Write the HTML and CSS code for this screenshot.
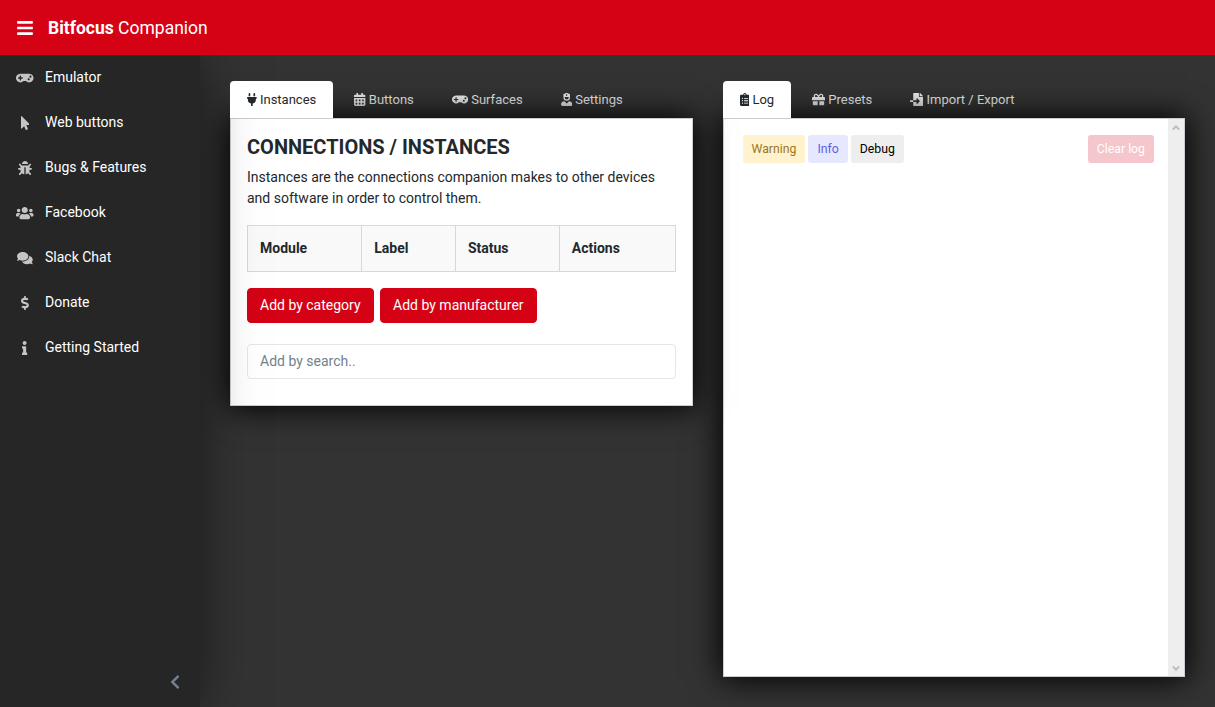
FILE: index.html
```html
<!DOCTYPE html>
<html>
<head>
	<meta charset="UTF-8">
	<title>Bitfocus Companion</title>
	<link rel="stylesheet" href="styles.css">
</head>
<body>
	<header class="topbar">
		<svg class="menu-icon" viewBox="0 0 448 512"><path d="M16 132h416c8.837 0 16-7.163 16-16V76c0-8.837-7.163-16-16-16H16C7.163 60 0 67.163 0 76v40c0 8.837 7.163 16 16 16zm0 160h416c8.837 0 16-7.163 16-16v-40c0-8.837-7.163-16-16-16H16c-8.837 0-16 7.163-16 16v40c0 8.837 7.163 16 16 16zm0 160h416c8.837 0 16-7.163 16-16v-40c0-8.837-7.163-16-16-16H16c-8.837 0-16 7.163-16 16v40c0 8.837 7.163 16 16 16z"/></svg>
		<div class="brand"><b>Bitfocus</b> Companion</div>
	</header>

	<div class="app-body">
		<nav class="sidebar">
			<ul class="nav-list">
				<li class="nav-item">
					<span class="nav-icon"><svg viewBox="0 0 640 512"><path d="M480.07 96H160a160 160 0 1 0 114.24 272h91.52A160 160 0 1 0 480.07 96zM248 268a12 12 0 0 1-12 12h-52v52a12 12 0 0 1-12 12h-24a12 12 0 0 1-12-12v-52H84a12 12 0 0 1-12-12v-24a12 12 0 0 1 12-12h52v-52a12 12 0 0 1 12-12h24a12 12 0 0 1 12 12v52h52a12 12 0 0 1 12 12zm216 76a40 40 0 1 1 40-40 40 40 0 0 1-40 40zm64-96a40 40 0 1 1 40-40 40 40 0 0 1-40 40z"/></svg></span>
					Emulator
				</li>
				<li class="nav-item">
					<span class="nav-icon"><svg viewBox="0 0 320 512"><path d="M302.189 329.126H196.105l55.831 135.993c3.889 9.428-.555 19.999-9.444 23.999l-49.165 21.427c-9.165 4-19.443-.571-23.332-9.714l-53.053-129.136-86.664 89.138C18.729 472.71 0 463.554 0 447.977V18.299C0 1.899 19.921-6.096 30.277 5.443l284.412 292.542c11.472 11.179 3.007 31.141-12.5 31.141z"/></svg></span>
					Web buttons
				</li>
				<li class="nav-item">
					<span class="nav-icon"><svg viewBox="0 0 512 512"><path d="M511.988 288.9c-.478 17.43-15.217 31.1-32.653 31.1H424v16c0 21.864-4.882 42.584-13.6 61.145l60.228 60.228c12.496 12.497 12.496 32.758 0 45.255-12.498 12.497-32.759 12.496-45.256 0l-54.736-54.736C345.886 467.965 314.351 480 280 480V236c0-6.627-5.373-12-12-12h-24c-6.627 0-12 5.373-12 12v244c-34.351 0-65.886-12.035-90.636-32.108l-54.736 54.736c-12.498 12.497-32.759 12.496-45.256 0-12.496-12.497-12.496-32.758 0-45.255l60.228-60.228C92.882 378.584 88 357.864 88 336v-16H32.666C15.23 320 .491 306.33.013 288.9-.484 270.816 14.028 256 32 256h56v-58.745l-46.628-46.628c-12.496-12.497-12.496-32.758 0-45.255 12.498-12.497 32.758-12.497 45.256 0L141.255 160h229.489l54.627-54.627c12.498-12.497 32.758-12.497 45.256 0 12.496 12.497 12.496 32.758 0 45.255L424 197.255V256h56c17.972 0 32.484 14.816 31.988 32.9zM257 0c-61.856 0-112 50.144-112 112h224C369 50.144 318.856 0 257 0z"/></svg></span>
					Bugs &amp; Features
				</li>
				<li class="nav-item">
					<span class="nav-icon"><svg viewBox="0 0 640 512"><path d="M96 224c35.3 0 64-28.7 64-64s-28.7-64-64-64-64 28.7-64 64 28.7 64 64 64zm448 0c35.3 0 64-28.7 64-64s-28.7-64-64-64-64 28.7-64 64 28.7 64 64 64zm32 32h-64c-17.6 0-33.5 7.1-45.1 18.6 40.3 22.1 68.9 62 75.1 109.4h66c17.7 0 32-14.3 32-32v-32c0-35.3-28.7-64-64-64zm-256 0c61.9 0 112-50.1 112-112S381.9 32 320 32 208 82.1 208 144s50.1 112 112 112zm76.8 32h-8.3c-20.8 10-43.9 16-68.5 16s-47.6-6-68.5-16h-8.3C179.6 288 128 339.6 128 403.2V432c0 26.5 21.5 48 48 48h288c26.5 0 48-21.5 48-48v-28.8c0-63.6-51.6-115.2-115.2-115.2zm-223.7-13.4C161.5 263.1 145.6 256 128 256H64c-35.3 0-64 28.7-64 64v32c0 17.7 14.3 32 32 32h65.9c6.3-47.4 34.9-87.3 75.2-109.4z"/></svg></span>
					Facebook
				</li>
				<li class="nav-item">
					<span class="nav-icon"><svg viewBox="0 0 576 512"><path d="M416 192c0-88.4-93.1-160-208-160S0 103.6 0 192c0 34.3 14.1 65.9 38 92-13.4 30.2-35.5 54.2-35.8 54.5-2.2 2.3-2.8 5.7-1.5 8.7S4.8 352 8 352c36.6 0 66.9-12.3 88.7-25 32.2 15.7 70.3 25 111.3 25 114.9 0 208-71.6 208-160zm122 220c23.9-26 38-57.7 38-92 0-66.9-53.5-124.2-129.3-148.1.9 6.6 1.3 13.3 1.3 20.1 0 105.9-107.7 192-240 192-10.8 0-21.3-.8-31.7-1.9C207.8 439.6 281.8 480 368 480c41 0 79.1-9.2 111.3-25 21.8 12.7 52.1 25 88.7 25 3.2 0 6.1-1.9 7.3-4.8 1.3-2.9.7-6.3-1.5-8.7-.3-.3-22.4-24.2-35.8-54.5z"/></svg></span>
					Slack Chat
				</li>
				<li class="nav-item">
					<span class="nav-icon"><svg viewBox="0 0 288 512"><path d="M209.2 233.4l-108-31.6C88.7 198.2 80 186.5 80 173.5c0-16.3 13.2-29.5 29.5-29.5h66.3c12.2 0 24.2 3.7 34.2 10.5 6.1 4.1 14.3 3.1 19.5-2l34.8-34c7.1-6.9 6.1-18.4-1.8-24.5C238 74.8 207.4 64.1 176 64V16c0-8.8-7.2-16-16-16h-32c-8.8 0-16 7.2-16 16v48h-2.5C45.8 64-5.4 118.7.5 183.6c4.2 46.1 39.4 83.6 83.8 96.6l102.5 30c12.5 3.7 21.2 15.3 21.2 28.3 0 16.3-13.2 29.5-29.5 29.5h-66.3C100 368 88 364.3 78 357.5c-6.1-4.1-14.3-3.1-19.5 2l-34.8 34c-7.1 6.9-6.1 18.4 1.8 24.5 24.5 19.2 55.1 29.9 86.5 30v48c0 8.8 7.2 16 16 16h32c8.8 0 16-7.2 16-16v-48.2c46.6-.9 90.3-28.6 105.7-72.7 21.5-61.6-14.6-124.8-72.5-141.7z"/></svg></span>
					Donate
				</li>
				<li class="nav-item">
					<span class="nav-icon"><svg viewBox="0 0 192 512"><path d="M20 424.229h20V279.771H20c-11.046 0-20-8.954-20-20V212c0-11.046 8.954-20 20-20h112c11.046 0 20 8.954 20 20v212.229h20c11.046 0 20 8.954 20 20V492c0 11.046-8.954 20-20 20H20c-11.046 0-20-8.954-20-20v-47.771c0-11.046 8.954-20 20-20zM96 0C56.235 0 24 32.235 24 72s32.235 72 72 72 72-32.235 72-72S135.764 0 96 0z"/></svg></span>
					Getting Started
				</li>
			</ul>
			<div class="minimizer">
				<svg viewBox="0 0 320 512"><path d="M34.52 239.03L228.87 44.69c9.37-9.37 24.57-9.37 33.94 0l22.67 22.67c9.36 9.36 9.37 24.52.04 33.9L131.49 256l154.02 154.75c9.34 9.38 9.32 24.54-.04 33.9l-22.67 22.67c-9.37 9.37-24.57 9.37-33.94 0L34.52 272.97c-9.37-9.37-9.37-24.57 0-33.94z"/></svg>
			</div>
		</nav>

		<main class="content">
			<section class="column">
				<ul class="tabs">
					<li class="tab active"><svg viewBox="0 0 384 512"><path d="M320,32a32,32,0,0,0-64,0v96h64Zm48,128H16A16,16,0,0,0,0,176v32a16,16,0,0,0,16,16H32v32A160.07,160.07,0,0,0,160,412.8V512h64V412.8A160.07,160.07,0,0,0,352,256V224h16a16,16,0,0,0,16-16V176A16,16,0,0,0,368,160ZM128,32a32,32,0,0,0-64,0v96h64Z"/></svg>Instances</li>
					<li class="tab"><svg viewBox="0 0 448 512"><path d="M0 464c0 26.5 21.5 48 48 48h352c26.5 0 48-21.5 48-48V192H0v272zm320-196c0-6.6 5.4-12 12-12h40c6.6 0 12 5.4 12 12v40c0 6.6-5.4 12-12 12h-40c-6.6 0-12-5.4-12-12v-40zm0 128c0-6.6 5.4-12 12-12h40c6.6 0 12 5.4 12 12v40c0 6.6-5.4 12-12 12h-40c-6.6 0-12-5.4-12-12v-40zM192 268c0-6.6 5.4-12 12-12h40c6.6 0 12 5.4 12 12v40c0 6.6-5.4 12-12 12h-40c-6.6 0-12-5.4-12-12v-40zm0 128c0-6.6 5.4-12 12-12h40c6.6 0 12 5.4 12 12v40c0 6.6-5.4 12-12 12h-40c-6.6 0-12-5.4-12-12v-40zM64 268c0-6.6 5.4-12 12-12h40c6.6 0 12 5.4 12 12v40c0 6.6-5.4 12-12 12H76c-6.6 0-12-5.4-12-12v-40zm0 128c0-6.6 5.4-12 12-12h40c6.6 0 12 5.4 12 12v40c0 6.6-5.4 12-12 12H76c-6.6 0-12-5.4-12-12v-40zM400 64h-48V16c0-8.8-7.2-16-16-16h-32c-8.8 0-16 7.2-16 16v48H160V16c0-8.8-7.2-16-16-16h-32c-8.8 0-16 7.2-16 16v48H48C21.5 64 0 85.5 0 112v48h448v-48c0-26.5-21.5-48-48-48z"/></svg>Buttons</li>
					<li class="tab"><svg viewBox="0 0 640 512"><path d="M480.07 96H160a160 160 0 1 0 114.24 272h91.52A160 160 0 1 0 480.07 96zM248 268a12 12 0 0 1-12 12h-52v52a12 12 0 0 1-12 12h-24a12 12 0 0 1-12-12v-52H84a12 12 0 0 1-12-12v-24a12 12 0 0 1 12-12h52v-52a12 12 0 0 1 12-12h24a12 12 0 0 1 12 12v52h52a12 12 0 0 1 12 12zm216 76a40 40 0 1 1 40-40 40 40 0 0 1-40 40zm64-96a40 40 0 1 1 40-40 40 40 0 0 1-40 40z"/></svg>Surfaces</li>
					<li class="tab"><svg viewBox="0 0 448 512"><path d="M319.41,320,224,415.39,128.59,320C57.1,323.1,0,381.6,0,453.79A58.21,58.21,0,0,0,58.21,512H389.79A58.21,58.21,0,0,0,448,453.79C448,381.6,390.9,323.1,319.41,320ZM224,304A128,128,0,0,0,352,176V65.82a32,32,0,0,0-20.76-30L246.47,4.07a64,64,0,0,0-44.94,0L116.76,35.86A32,32,0,0,0,96,65.82V176A128,128,0,0,0,224,304ZM184,71.67a5,5,0,0,1,5-5h21.67V45a5,5,0,0,1,5-5h16.66a5,5,0,0,1,5,5V66.67H259a5,5,0,0,1,5,5V88.33a5,5,0,0,1-5,5H237.33V115a5,5,0,0,1-5,5H215.67a5,5,0,0,1-5-5V93.33H189a5,5,0,0,1-5-5ZM144,160H304v16a80,80,0,0,1-160,0Z"/></svg>Settings</li>
				</ul>
				<div class="panel panel-instances">
					<h3 class="panel-title">CONNECTIONS / INSTANCES</h3>
					<p class="panel-text">Instances are the connections companion makes to other devices and software in order to control them.</p>
					<table class="instances-table">
						<thead>
							<tr>
								<th>Module</th>
								<th>Label</th>
								<th>Status</th>
								<th>Actions</th>
							</tr>
						</thead>
					</table>
					<div class="add-buttons">
						<button class="btn-primary">Add by category</button>
						<button class="btn-primary">Add by manufacturer</button>
					</div>
					<input class="search" type="text" placeholder="Add by search..">
				</div>
			</section>

			<section class="column">
				<ul class="tabs">
					<li class="tab active"><svg viewBox="0 0 384 512"><path d="M336 64h-80c0-35.3-28.7-64-64-64s-64 28.7-64 64H48C21.5 64 0 85.5 0 112v352c0 26.5 21.5 48 48 48h288c26.5 0 48-21.5 48-48V112c0-26.5-21.5-48-48-48zM96 424c-13.3 0-24-10.7-24-24s10.7-24 24-24 24 10.7 24 24-10.7 24-24 24zm0-96c-13.3 0-24-10.7-24-24s10.7-24 24-24 24 10.7 24 24-10.7 24-24 24zm0-96c-13.3 0-24-10.7-24-24s10.7-24 24-24 24 10.7 24 24-10.7 24-24 24zm96-192c13.3 0 24 10.7 24 24s-10.7 24-24 24-24-10.7-24-24 10.7-24 24-24zm128 368c0 4.4-3.6 8-8 8H168c-4.4 0-8-3.6-8-8v-16c0-4.4 3.6-8 8-8h144c4.4 0 8 3.6 8 8v16zm0-96c0 4.4-3.6 8-8 8H168c-4.4 0-8-3.6-8-8v-16c0-4.4 3.6-8 8-8h144c4.4 0 8 3.6 8 8v16zm0-96c0 4.4-3.6 8-8 8H168c-4.4 0-8-3.6-8-8v-16c0-4.4 3.6-8 8-8h144c4.4 0 8 3.6 8 8v16z"/></svg>Log</li>
					<li class="tab"><svg viewBox="0 0 512 512"><path d="M32 448c0 17.7 14.3 32 32 32h160V320H32v128zm256 32h160c17.7 0 32-14.3 32-32V320H288v160zm192-320h-42.1c6.2-12.1 10.1-25.5 10.1-40 0-48.5-39.5-88-88-88-41.6 0-68.5 21.3-103 68.3-34.5-47-61.4-68.3-103-68.3-48.5 0-88 39.5-88 88 0 14.5 3.8 27.9 10.1 40H32c-17.7 0-32 14.3-32 32v80c0 8.8 7.2 16 16 16h480c8.8 0 16-7.2 16-16v-80c0-17.7-14.3-32-32-32zm-326.1 0c-22.1 0-40-17.9-40-40s17.9-40 40-40c19.9 0 34.6 3.3 86.1 80h-86.1zm206.1 0h-86.1c51.4-76.5 65.7-80 86.1-80 22.1 0 40 17.9 40 40s-17.9 40-40 40z"/></svg>Presets</li>
					<li class="tab"><svg viewBox="0 0 512 512"><path d="M16 288c-8.8 0-16 7.2-16 16v32c0 8.8 7.2 16 16 16h112v-64zm489-183L407.1 7c-4.5-4.5-10.6-7-17-7H384v128h128v-6.1c0-6.3-2.5-12.4-7-16.9zm-153 31V0H152c-13.3 0-24 10.7-24 24v264h128v-65.2c0-14.3 17.3-21.4 27.4-11.3L379 308c6.6 6.7 6.6 17.4 0 24l-95.7 96.4c-10.1 10.1-27.4 3-27.4-11.3V352H128v136c0 13.3 10.7 24 24 24h336c13.3 0 24-10.7 24-24V160H376c-13.2 0-24-10.8-24-24z"/></svg>Import / Export</li>
				</ul>
				<div class="panel panel-log">
					<div class="log-body">
						<div class="log-toolbar">
							<button class="btn-log warning">Warning</button>
							<button class="btn-log info">Info</button>
							<button class="btn-log debug">Debug</button>
							<button class="btn-log clear">Clear log</button>
						</div>
					</div>
					<div class="scrollbar">
						<svg viewBox="0 0 16 17"><path d="M8 6 11.8 9.8 10.4 11.2 8 8.8 5.6 11.2 4.2 9.8z"/></svg>
						<svg viewBox="0 0 16 17"><path d="M8 12 4.2 8.2 5.6 6.8 8 9.2 10.4 6.8 11.8 8.2z"/></svg>
					</div>
				</div>
			</section>
		</main>
	</div>
</body>
</html>
```

FILE: styles.css
```css
* {
	box-sizing: border-box;
}

html, body {
	height: 100%;
}

body {
	margin: 0;
	display: flex;
	flex-direction: column;
	overflow: hidden;
	background-color: #333;
	color: #23282c;
	font-family: Roboto, "Liberation Sans", sans-serif;
	font-size: 14px;
	line-height: 21px;
}

svg {
	fill: currentColor;
}

/* top bar */
.topbar {
	flex: 0 0 55px;
	display: flex;
	align-items: center;
	position: relative;
	z-index: 3;
	padding-left: 17px;
	background-color: #d50215;
	color: #fff;
}

.menu-icon {
	width: 16px;
	height: 18px;
	margin-right: 15px;
}

.brand {
	margin-top: 2px;
	font-size: 17.5px;
}

.brand b {
	font-weight: 700;
}

/* sidebar */
.app-body {
	flex: 1;
	display: flex;
	min-height: 0;
}

.sidebar {
	flex: 0 0 200px;
	display: flex;
	flex-direction: column;
	position: relative;
	z-index: 2;
	background-color: #262626;
	color: #fff;
	box-shadow: 0 0 50px rgba(0, 0, 0, 0.5);
}

.nav-list {
	flex: 1;
	margin: 0;
	padding: 0;
	list-style: none;
}

.nav-item {
	display: flex;
	align-items: center;
	height: 45px;
	padding-left: 16px;
}

.nav-icon {
	width: 18px;
	height: 14px;
	margin-right: 11px;
	display: flex;
	justify-content: center;
	color: #c4c4c4;
}

.nav-icon svg {
	height: 14px;
}

.minimizer {
	flex: 0 0 50px;
	align-self: flex-end;
	width: 50px;
	display: flex;
	align-items: center;
	justify-content: center;
	color: #73818f;
}

.minimizer svg {
	height: 16px;
}

/* main area */
.content {
	flex: 1;
	min-width: 0;
	display: grid;
	grid-template-columns: 1fr 1fr;
	gap: 30px;
	padding: 26px 30px 30px;
}

.column {
	display: flex;
	flex-direction: column;
	min-width: 0;
}

.tabs {
	display: flex;
	gap: 4px;
	margin: 0;
	padding: 0;
	list-style: none;
}

.tab {
	display: flex;
	align-items: center;
	height: 37px;
	padding: 0 17px;
	border-radius: 4px 4px 0 0;
	color: #eceded;
	font-size: 13px;
}

.tab svg {
	height: 13px;
	margin-right: 3.2px;
}

.tab.active {
	position: relative;
	z-index: 2;
	background-color: #fff;
	color: #23282c;
}

.panel {
	position: relative;
	background-color: #fff;
	border: 1px solid #c8ced3;
	box-shadow: 0 0 30px 2px #000;
}

.panel-instances {
	z-index: 1;
	padding: 16px 16px 26px;
}

.panel-title {
	margin: 0 0 8px;
	font-size: 20px;
	font-weight: 700;
	line-height: 24px;
}

.panel-text {
	margin: 0 0 16px;
}

.instances-table {
	width: 100%;
	margin-bottom: 16px;
	border-collapse: collapse;
}

.instances-table th {
	padding: 12px;
	border: 1px solid #d8d8d8;
	background-color: #f9f9f9;
	text-align: left;
	font-weight: 700;
}

.add-buttons {
	display: flex;
	gap: 6.5px;
	margin-bottom: 21px;
}

.btn-primary {
	height: 35px;
	padding: 0 12px;
	border: 1px solid #d50215;
	border-radius: 4px;
	background-color: #d50215;
	color: #fff;
	font: inherit;
}

.search {
	display: block;
	width: 100%;
	height: 35px;
	padding: 5px 12px 7px;
	border: 1px solid #e4e7ea;
	border-radius: 4px;
	color: #5c6873;
	font: inherit;
}

.search::placeholder {
	color: #73818f;
	opacity: 1;
}

/* log panel */
.panel-log {
	flex: 1;
	display: flex;
	min-height: 0;
}

.log-body {
	flex: 1;
	padding: 16px 14px 0 19px;
}

.log-toolbar {
	display: flex;
	gap: 3px;
}

.btn-log {
	height: 28px;
	padding: 0 8px;
	border: 1px solid transparent;
	border-radius: 3px;
	font-family: inherit;
	font-size: 12.25px;
}

.btn-log.warning {
	background-color: #fff2cc;
	color: #9c7722;
}

.btn-log.info {
	background-color: #e6e8ff;
	color: #5a62e0;
}

.btn-log.debug {
	background-color: #eee;
	color: #000;
}

.btn-log.clear {
	margin-left: auto;
	background-color: #f5c6cb;
	color: #fff;
}

.scrollbar {
	flex: 0 0 16px;
	display: flex;
	flex-direction: column;
	justify-content: space-between;
	background-color: #eee;
	color: #bdbdbd;
}

.scrollbar svg {
	width: 16px;
	height: 17px;
}
```
